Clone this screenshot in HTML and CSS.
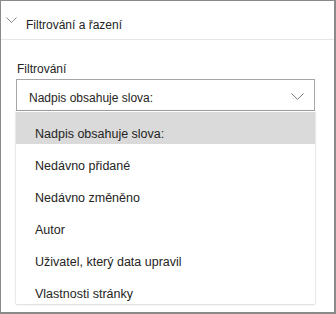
FILE: index.html
```html
<!DOCTYPE html>
<html lang="cs">
<head>
<meta charset="utf-8">
<link rel="stylesheet" href="styles.css">
</head>
<body>
<div class="frame">
  <div class="header">
    <svg class="hchev" width="11" height="6" viewBox="0 0 11 6"><path d="M0.5 0.5 L5.5 5.5 L10.5 0.5" fill="none" stroke="#8a8a8a" stroke-width="1"/></svg>
    <span class="title">Filtrování a řazení</span>
  </div>
  <div class="section">
    <div class="label">Filtrování</div>
    <div class="select">
      <span class="value">Nadpis obsahuje slova:</span>
      <svg class="dchev" width="13" height="7" viewBox="0 0 13 7"><path d="M0.5 0.5 L6.5 6.3 L12.5 0.5" fill="none" stroke="#7a7a7a" stroke-width="1"/></svg>
    </div>
    <ul class="menu">
      <li class="item active">Nadpis obsahuje slova:</li>
      <li class="item">Nedávno přidané</li>
      <li class="item">Nedávno změněno</li>
      <li class="item">Autor</li>
      <li class="item">Uživatel, který data upravil</li>
      <li class="item">Vlastnosti stránky</li>
    </ul>
  </div>
</div>
</body>
</html>
```
FILE: styles.css
```css
* { box-sizing: border-box; }
html, body { margin: 0; padding: 0; background: #fff; }
body {
  font-family: "Liberation Sans", Arial, sans-serif;
  color: #252423;
}
.frame {
  width: 336px;
  height: 314px;
  border-style: solid;
  border-color: #8a8a8a;
  border-width: 1px 2px 2px 1px;
  overflow: hidden;
}
.header {
  height: 39px;
  border-bottom: 1px solid #e6e6e6;
  display: flex;
  align-items: flex-start;
  padding-left: 5px;
  padding-top: 16px;
}
.hchev { display: block; margin-top: 0; }
.title {
  font-size: 12px;
  line-height: 14px;
  margin-left: 9px;
  margin-top: 1px;
}
.section {
  padding: 21px 19px 0 15px;
}
.label {
  font-size: 12px;
  line-height: 16px;
  height: 16px;
  margin-bottom: 2px;
  padding-left: 1px;
}
.select {
  height: 32px;
  border: 1px solid #a6a6a6;
  display: flex;
  align-items: flex-start;
  justify-content: space-between;
  padding: 0 10px 0 12px;
}
.value {
  font-size: 12px;
  line-height: 16px;
  padding-top: 10px;
}
.dchev { display: block; margin-top: 13px; }
.menu {
  list-style: none;
  margin: 0;
  padding: 1px 0 0;
  background: #fff;
  box-shadow: 0 0 2px rgba(0,0,0,0.18), 0 1px 2px rgba(0,0,0,0.08);
}
.item {
  height: 32px;
  font-size: 12.5px;
  line-height: 16px;
  padding: 14px 0 0 19px;
  white-space: nowrap;
}
.item.active { background: #dadada; }
```
